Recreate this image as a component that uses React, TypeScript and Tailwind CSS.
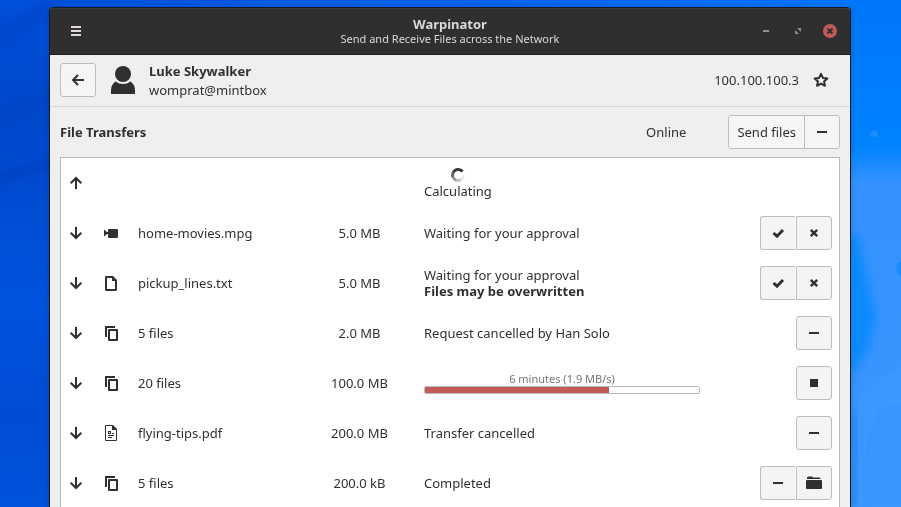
import React from 'react';

type FileKind = 'video' | 'text' | 'multiple' | 'document';
type Action = 'accept' | 'reject' | 'remove' | 'stop' | 'open';

interface Transfer {
  id: number;
  direction: 'up' | 'down';
  kind?: FileKind;
  name?: string;
  size?: string;
  status: React.ReactNode;
  actions: Action[];
}

interface GlyphProps {
  children: React.ReactNode;
  className?: string;
}

function Glyph({ children, className = '' }: GlyphProps) {
  return (
    <svg
      width="16"
      height="16"
      viewBox="0 0 16 16"
      fill="currentColor"
      aria-hidden="true"
      className={`block shrink-0 ${className}`}
    >
      {children}
    </svg>
  );
}

const stroke = { fill: 'none', stroke: 'currentColor', strokeWidth: 2 };

function ArrowGlyph({ direction }: { direction: 'up' | 'down' | 'left' }) {
  if (direction === 'left') {
    return (
      <Glyph>
        <path d="M14 8H3.5M8 3 3 8l5 5" {...stroke} />
      </Glyph>
    );
  }
  return (
    <Glyph>
      {direction === 'up' ? (
        <path d="M8 14V3.5M2.7 8.3 8 3l5.300 5.300" {...stroke} />
      ) : (
        <path d="M8 2v10.500M2.700 7.700 8 13l5.300-5.300" {...stroke} />
      )}
    </Glyph>
  );
}

function FileGlyph({ kind }: { kind: FileKind }) {
  switch (kind) {
    case 'video':
      return (
        <Glyph>
          <path d="M1 4.500 4 7v2L1 11.500z" />
          <path d="M3 7h3v2H3z" />
          <rect x="5" y="4" width="10" height="9" rx="1.200" />
        </Glyph>
      );
    case 'text':
      return (
        <Glyph>
          <path
            fillRule="evenodd"
            d="M3 1h7l4 4v10a1 1 0 0 1-1 1H3a1 1 0 0 1-1-1V2a1 1 0 0 1 1-1zm1 2v11h8V6H9V3z"
          />
        </Glyph>
      );
    case 'multiple':
      return (
        <Glyph>
          <path d="M2 1h10v2H4v9H2z" />
          <path fillRule="evenodd" d="M6 4h8a1 1 0 0 1 1 1v10a1 1 0 0 1-1 1H6a1 1 0 0 1-1-1V5a1 1 0 0 1 1-1zm1 2v8h6V6z" />
        </Glyph>
      );
    default:
      return (
        <Glyph>
          <path
            fillRule="evenodd"
            d="M3 0h7l4 4v11a1 1 0 0 1-1 1H3a1 1 0 0 1-1-1V1a1 1 0 0 1 1-1zm0 1v14h10V5H9V1z"
          />
          <path fillRule="evenodd" d="M5 6h3v3H5zm1 1v1h1V7z" />
          <path d="M9 8h2v1H9zM5 10h6v1H5zM5 12h4v1H5z" />
        </Glyph>
      );
  }
}

function MinusGlyph() {
  return (
    <Glyph>
      <rect x="3" y="7" width="10" height="2" />
    </Glyph>
  );
}

function ActionGlyph({ action }: { action: Action }) {
  switch (action) {
    case 'accept':
      return (
        <Glyph>
          <path d="M3.500 8 7 11.200 13 5" fill="none" stroke="currentColor" strokeWidth="3" />
        </Glyph>
      );
    case 'reject':
      return (
        <Glyph>
          <path d="M4.800 4.800l6.400 6.400M11.200 4.800l-6.400 6.400" fill="none" stroke="currentColor" strokeWidth="2.400" />
        </Glyph>
      );
    case 'stop':
      return (
        <Glyph>
          <rect x="4" y="4" width="8" height="8" />
        </Glyph>
      );
    case 'open':
      return (
        <Glyph>
          <path d="M1 4V2.500L2 1.500h4l1 1h6.500l1 1V4z" />
          <rect x="0" y="5" width="16" height="9" rx="1" />
        </Glyph>
      );
    default:
      return <MinusGlyph />;
  }
}

const actionLabels: Record<Action, string> = {
  accept: 'Approve transfer',
  reject: 'Decline transfer',
  remove: 'Remove from list',
  stop: 'Stop transfer',
  open: 'Open folder',
};

function Spinner() {
  return (
    <Glyph>
      <g fill="none" strokeWidth="3">
        <path d="M12.500 4.500A5.500 5.500 0 0 0 8 2.500" stroke="#303030" />
        <path d="M8.500 2.500A5.500 5.500 0 0 0 3.200 5.500" stroke="#3c3c3c" />
        <path d="M3.500 5A5.500 5.500 0 0 0 3 10.200" stroke="#666666" />
        <path d="M2.900 10A5.500 5.500 0 0 0 6.500 13.300" stroke="#989898" />
        <path d="M6.300 13.200A5.500 5.500 0 0 0 11 12.500" stroke="#c4c4c4" />
        <path d="M10.800 12.600A5.500 5.500 0 0 0 13.500 8.500" stroke="#ececec" />
      </g>
    </Glyph>
  );
}

const transfers: Transfer[] = [
  {
    id: 1,
    direction: 'up',
    status: (
      <div className="inline-flex flex-col items-center align-middle">
        <Spinner />
        <span>Calculating</span>
      </div>
    ),
    actions: [],
  },
  {
    id: 2,
    direction: 'down',
    kind: 'video',
    name: 'home-movies.mpg',
    size: '5.0 MB',
    status: 'Waiting for your approval',
    actions: ['accept', 'reject'],
  },
  {
    id: 3,
    direction: 'down',
    kind: 'text',
    name: 'pickup_lines.txt',
    size: '5.0 MB',
    status: (
      <>
        <p>Waiting for your approval</p>
        <p className="font-bold">Files may be overwritten</p>
      </>
    ),
    actions: ['accept', 'reject'],
  },
  {
    id: 4,
    direction: 'down',
    kind: 'multiple',
    name: '5 files',
    size: '2.0 MB',
    status: 'Request cancelled by Han Solo',
    actions: ['remove'],
  },
  {
    id: 5,
    direction: 'down',
    kind: 'multiple',
    name: '20 files',
    size: '100.0 MB',
    status: (
      <div className="flex flex-col">
        <label htmlFor="transfer-progress" className="text-center text-[11px] leading-[14px] text-[#767676]">
          6 minutes (1.9 MB/s)
        </label>
        <progress
          id="transfer-progress"
          value={67}
          max={100}
          className="block h-2 w-full appearance-none overflow-hidden rounded-xs border border-[#b9b9b9] bg-white [&::-webkit-progress-bar]:bg-white [&::-webkit-progress-value]:bg-[#c15b58]"
        />
      </div>
    ),
    actions: ['stop'],
  },
  {
    id: 6,
    direction: 'down',
    kind: 'document',
    name: 'flying-tips.pdf',
    size: '200.0 MB',
    status: 'Transfer cancelled',
    actions: ['remove'],
  },
  {
    id: 7,
    direction: 'down',
    kind: 'multiple',
    name: '5 files',
    size: '200.0 kB',
    status: 'Completed',
    actions: ['remove', 'open'],
  },
];

function Wallpaper() {
  return (
    <svg
      aria-hidden="true"
      viewBox="0 0 901 507"
      preserveAspectRatio="none"
      className="absolute inset-0 -z-10 h-full w-full"
    >
      <defs>
        <linearGradient id="sky" x1="0" x2="1" y1="0" y2="0">
          <stop offset="0" stopColor="#004ed6" />
          <stop offset="0.3" stopColor="#005ae2" />
          <stop offset="0.65" stopColor="#0066ee" />
          <stop offset="0.94" stopColor="#0074f8" />
          <stop offset="1" stopColor="#007aff" />
        </linearGradient>
        <linearGradient id="left" x1="0" x2="0" y1="0" y2="1">
          <stop offset="0" stopColor="#0050da" />
          <stop offset="0.2" stopColor="#0048cc" />
          <stop offset="0.36" stopColor="#004bd0" />
          <stop offset="0.6" stopColor="#0053de" />
          <stop offset="0.82" stopColor="#004cd4" />
          <stop offset="1" stopColor="#0053dc" />
        </linearGradient>
        <linearGradient id="right" x1="0" x2="0" y1="0" y2="1">
          <stop offset="0" stopColor="#0076fa" />
          <stop offset="0.29" stopColor="#0084ff" />
          <stop offset="0.36" stopColor="#3492ff" />
          <stop offset="1" stopColor="#3a97ff" />
        </linearGradient>
        <filter id="soft" x="-50%" y="-50%" width="200%" height="200%">
          <feGaussianBlur stdDeviation="4" />
        </filter>
      </defs>
      <rect width="901" height="507" fill="url(#sky)" />
      <rect width="60" height="507" fill="url(#left)" />
      <rect x="845" width="56" height="507" fill="url(#right)" />
      <g filter="url(#soft)">
        <path d="M0 25 50 0v14L0 52z" fill="#0042c2" opacity="0.5" />
        <path d="M0 112 55 88v10L0 132z" fill="#0042c0" opacity="0.5" />
        <path d="M0 172 55 158v8L0 184z" fill="#003eba" opacity="0.6" />
        <path d="M848 236h10l6 30 12 50-8 34-20 30z" fill="#0088ff" opacity="0.8" />
        <path d="M848 410h14l-2 97h-12z" fill="#2a8cf8" opacity="0.7" />
      </g>
      <path d="M858 400q18-20 43-34v40q-18-4-24 6-10 24-14 50v45h-5z" fill="#3c9aff" opacity="0.7" />
      <path d="M870 136l4-7 3 2 1 6z" fill="#3395ff" opacity="0.6" />
      <path d="M896 266q2-5 5-4v14q-4-2-5-10z" fill="#1688fa" opacity="0.8" />
    </svg>
  );
}

function TitleBar() {
  return (
    <header className="grid h-[47px] shrink-0 grid-cols-[1fr_auto_1fr] items-center border-b border-[#1f1f1f] bg-[#2f2f2f] px-3 text-[#dadada] shadow-[inset_0_1px_0_#3b3b3b]">
      <button type="button" aria-label="Menu" className="ml-1.5 justify-self-start text-[#e2dada]">
        <Glyph>
          <path d="M3 3h10v2H3zM3 7h10v2H3zM3 11h10v2H3z" />
        </Glyph>
      </button>
      <div className="text-center">
        <h1 className="text-[13px] leading-4 font-bold">Warpinator</h1>
        <p className="text-[11px] leading-[14px]">Send and Receive Files across the Network</p>
      </div>
      <div className="flex gap-4 justify-self-end text-[#8e8e8e]">
        <button type="button" aria-label="Minimize">
          <Glyph>
            <rect x="5" y="7" width="6" height="2" />
          </Glyph>
        </button>
        <button type="button" aria-label="Maximize">
          <Glyph>
            <path d="M7 5h4v4zM5 7l4 4H5z" />
          </Glyph>
        </button>
        <button type="button" aria-label="Close">
          <Glyph>
            <circle cx="8" cy="8" r="7" fill="#c15b58" />
            <path d="M5.500 5.500l5 5M10.500 5.500l-5 5" fill="none" stroke="#2f2f2f" strokeWidth="2" />
          </Glyph>
        </button>
      </div>
    </header>
  );
}

function UserBar() {
  return (
    <section className="flex h-[52px] shrink-0 items-center border-b border-[#d6d6d6] pr-[21px] pb-0.5 pl-[10px]">
      <button
        type="button"
        aria-label="Back"
        className="flex h-[34px] w-9 items-center justify-center rounded-[3px] border border-[#bdbdbd] bg-[#f5f5f5]"
      >
        <ArrowGlyph direction="left" />
      </button>
      <svg width="24" height="28" viewBox="0 0 24 28" fill="currentColor" aria-hidden="true" className="ml-[15px]">
        <circle cx="12" cy="8" r="8" />
        <path d="M0 28v-4q0-5.500 4.500-8.500Q8 18 12 18t7.500-2.500Q24 18.500 24 24v4z" />
      </svg>
      <div className="ml-[14px] grow pt-0.5 leading-[19px]">
        <h2 className="font-bold">Luke Skywalker</h2>
        <p>womprat@mintbox</p>
      </div>
      <span>100.100.100.3</span>
      <button type="button" aria-label="Favorite" className="ml-[14px]">
        <Glyph>
          <path
            d="M8 1.800 9.900 5.900 14.400 6.400 11 9.400 12 13.800 8 11.600 4 13.800 5 9.400 1.600 6.400 6.100 5.900z"
            fill="none"
            stroke="currentColor"
            strokeWidth="2"
            strokeLinejoin="round"
          />
        </Glyph>
      </button>
    </section>
  );
}

function RowActions({ actions }: { actions: Action[] }) {
  return (
    <div className="flex justify-end gap-px">
      {actions.map((action, index) => {
        const first = index === 0;
        const last = index === actions.length - 1;
        return (
          <button
            key={action}
            type="button"
            aria-label={actionLabels[action]}
            className={`flex h-[34px] items-center justify-center border border-[#bdbdbd] bg-[#f4f4f4] ${
              first ? 'rounded-l-[3px]' : ''
            } ${last ? 'w-9 rounded-r-[3px]' : 'w-[35px] border-r-0'}`}
          >
            <ActionGlyph action={action} />
          </button>
        );
      })}
    </div>
  );
}

function TransferTable() {
  return (
    <div className="mx-[10px] grow border border-b-0 border-[#b9b9b9] bg-white">
      <table aria-label="File transfers" className="w-full table-fixed border-collapse">
        <colgroup>
          <col className="w-[30px]" />
          <col className="w-10" />
          <col />
          <col className="w-[95px]" />
          <col className="w-[293px]" />
          <col className="w-[139px]" />
        </colgroup>
        <tbody>
          {transfers.map((transfer) => (
            <tr key={transfer.id} className="h-[50px]">
              <td className="pl-[7px]">
                <ArrowGlyph direction={transfer.direction} />
              </td>
              <td className="pl-3">{transfer.kind && <FileGlyph kind={transfer.kind} />}</td>
              <td className="pl-[7px]">{transfer.name}</td>
              <td className="text-center">{transfer.size}</td>
              <td className="pl-[17px]">{transfer.status}</td>
              <td className="pr-[7px]">
                <RowActions actions={transfer.actions} />
              </td>
            </tr>
          ))}
        </tbody>
      </table>
    </div>
  );
}

export default function App() {
  return (
    <div className="relative isolate flex h-screen flex-col overflow-hidden bg-[#0056df] pt-[7px] pr-[50px] pl-[49px] font-['Noto_Sans',sans-serif] text-[13px] leading-4 text-[#303030]">
      <Wallpaper />
      <main className="flex grow flex-col overflow-hidden rounded-t-[4px] border border-b-0 border-[#171a24] bg-[#efefef] shadow-[0_2px_6px_rgba(0,0,0,0.2)]">
        <TitleBar />
        <UserBar />
        <section className="flex h-[50px] shrink-0 items-center px-[10px]">
          <h2 className="grow font-bold">File Transfers</h2>
          <span>Online</span>
          <div className="ml-[42px] flex h-[34px] overflow-hidden rounded-[3px] border border-[#bdbdbd] bg-[#f5f5f5]">
            <button type="button" className="px-2 whitespace-nowrap">
              Send files
            </button>
            <button
              type="button"
              aria-label="More send options"
              className="flex w-[35px] items-center justify-center border-l border-[#bdbdbd]"
            >
              <MinusGlyph />
            </button>
          </div>
        </section>
        <TransferTable />
      </main>
    </div>
  );
}
